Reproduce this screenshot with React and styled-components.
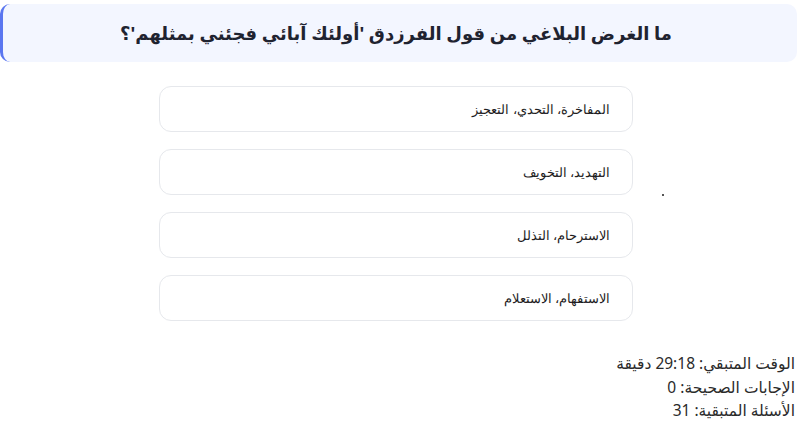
import styled, { createGlobalStyle } from 'styled-components'

const GlobalStyle = createGlobalStyle`
  html, body {
    margin: 0;
    padding: 0;
    background: #fff;
  }
  body {
    font-family: "Noto Sans", "DejaVu Sans", sans-serif;
  }
`

const Page = styled.div`
  direction: rtl;
  padding: 4px 3px 0 0;
  width: 800px;
  height: 445px;
  box-sizing: border-box;
`

const QuestionBar = styled.div`
  direction: ltr;
  height: 58px;
  box-sizing: border-box;
  background: #f3f6ff;
  border-left: 3px solid #5a76f0;
  border-radius: 10px;
  display: flex;
  align-items: center;
  justify-content: center;
  padding-right: 8px;

  & h1 {
    margin: 0;
    direction: rtl;
    font-size: 18px;
    font-weight: 700;
    color: #1f2330;
  }
`

const Body = styled.div`
  direction: ltr;
  display: flex;
  align-items: flex-start;
  padding-left: 159px;
  margin-top: 24px;
`

const Options = styled.div`
  display: flex;
  flex-direction: column;
  gap: 17px;
  width: 474px;
`

const Option = styled.div`
  direction: rtl;
  height: 46px;
  box-sizing: border-box;
  border: 1.5px solid #e6e8ec;
  border-radius: 12px;
  display: flex;
  align-items: center;
  padding-right: 22px;
  font-family: "Liberation Sans", Arial, sans-serif;
  font-size: 12.5px;
  font-weight: 500;
  color: #1e1e1e;
`

const Dot = styled.span`
  width: 2px;
  height: 2px;
  background: #555;
  margin-left: 29px;
  margin-top: 108px;
`

const Stats = styled.div`
  margin-top: 31px;
  padding-right: 2px;
  display: flex;
  flex-direction: column;
  font-size: 15.5px;
  color: #2a2a2a;
  line-height: 23.5px;
`

const options = [
  'المفاخرة، التحدي، التعجيز',
  'التهديد، التخويف',
  'الاسترحام، التذلل',
  'الاستفهام، الاستعلام',
]

export default function App() {
  return (
    <>
      <GlobalStyle />
      <Page>
        <QuestionBar>
          <h1>ما الغرض البلاغي من قول الفرزدق 'أولئك آبائي فجئني بمثلهم'؟</h1>
        </QuestionBar>
        <Body>
          <Options>
            {options.map(o => (
              <Option key={o}>{o}</Option>
            ))}
          </Options>
          <Dot />
        </Body>
        <Stats>
          <div>الوقت المتبقي: 29:18 دقيقة</div>
          <div>الإجابات الصحيحة: 0</div>
          <div>الأسئلة المتبقية: 31</div>
        </Stats>
      </Page>
    </>
  )
}
